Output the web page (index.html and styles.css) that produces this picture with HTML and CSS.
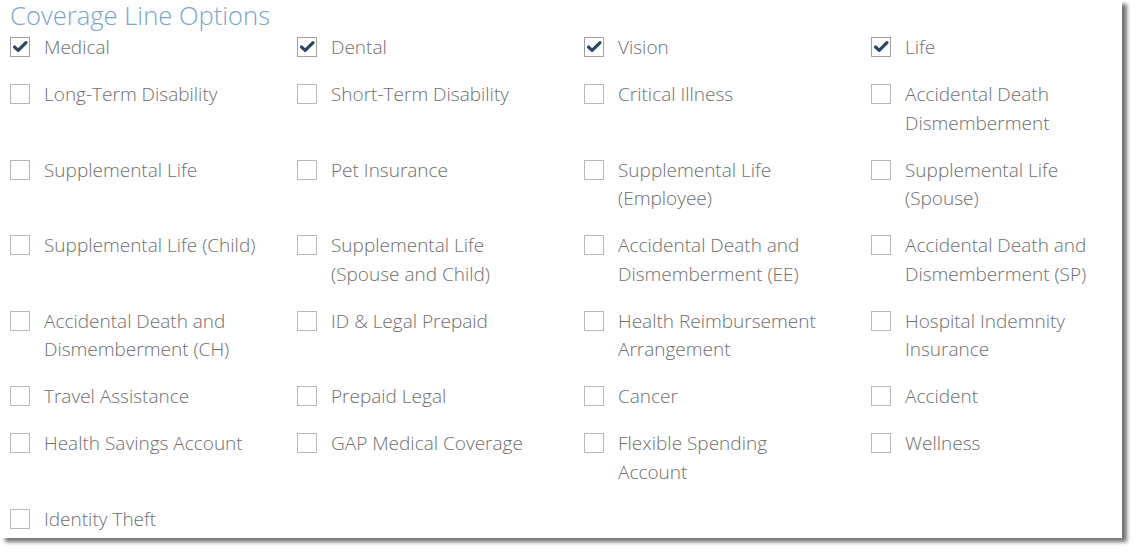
FILE: index.html
```html
<!DOCTYPE html>
<html>
<head>
<meta charset="utf-8">
<link rel="stylesheet" href="styles.css">
</head>
<body>
<div class="card">
  <h1 class="title">Coverage Line Options</h1>
  <div class="grid">
    <label class="opt"><span class="box checked"><svg viewBox="0 0 18 18"><path d="M3.5 9 L7.2 12.4 L15 4.6" /></svg></span><span class="txt">Medical</span></label>
    <label class="opt"><span class="box checked"><svg viewBox="0 0 18 18"><path d="M3.5 9 L7.2 12.4 L15 4.6" /></svg></span><span class="txt">Dental</span></label>
    <label class="opt"><span class="box checked"><svg viewBox="0 0 18 18"><path d="M3.5 9 L7.2 12.4 L15 4.6" /></svg></span><span class="txt">Vision</span></label>
    <label class="opt"><span class="box checked"><svg viewBox="0 0 18 18"><path d="M3.5 9 L7.2 12.4 L15 4.6" /></svg></span><span class="txt">Life</span></label>

    <label class="opt"><span class="box"></span><span class="txt">Long-Term Disability</span></label>
    <label class="opt"><span class="box"></span><span class="txt">Short-Term Disability</span></label>
    <label class="opt"><span class="box"></span><span class="txt">Critical Illness</span></label>
    <label class="opt"><span class="box"></span><span class="txt">Accidental Death<br>Dismemberment</span></label>

    <label class="opt"><span class="box"></span><span class="txt">Supplemental Life</span></label>
    <label class="opt"><span class="box"></span><span class="txt">Pet Insurance</span></label>
    <label class="opt"><span class="box"></span><span class="txt">Supplemental Life<br>(Employee)</span></label>
    <label class="opt"><span class="box"></span><span class="txt">Supplemental Life<br>(Spouse)</span></label>

    <label class="opt"><span class="box"></span><span class="txt">Supplemental Life (Child)</span></label>
    <label class="opt"><span class="box"></span><span class="txt">Supplemental Life<br>(Spouse and Child)</span></label>
    <label class="opt"><span class="box"></span><span class="txt">Accidental Death and<br>Dismemberment (EE)</span></label>
    <label class="opt"><span class="box"></span><span class="txt">Accidental Death and<br>Dismemberment (SP)</span></label>

    <label class="opt"><span class="box"></span><span class="txt">Accidental Death and<br>Dismemberment (CH)</span></label>
    <label class="opt"><span class="box"></span><span class="txt">ID &amp; Legal Prepaid</span></label>
    <label class="opt"><span class="box"></span><span class="txt">Health Reimbursement<br>Arrangement</span></label>
    <label class="opt"><span class="box"></span><span class="txt">Hospital Indemnity<br>Insurance</span></label>

    <label class="opt"><span class="box"></span><span class="txt">Travel Assistance</span></label>
    <label class="opt"><span class="box"></span><span class="txt">Prepaid Legal</span></label>
    <label class="opt"><span class="box"></span><span class="txt">Cancer</span></label>
    <label class="opt"><span class="box"></span><span class="txt">Accident</span></label>

    <label class="opt"><span class="box"></span><span class="txt">Health Savings Account</span></label>
    <label class="opt"><span class="box"></span><span class="txt">GAP Medical Coverage</span></label>
    <label class="opt"><span class="box"></span><span class="txt">Flexible Spending<br>Account</span></label>
    <label class="opt"><span class="box"></span><span class="txt">Wellness</span></label>

    <label class="opt"><span class="box"></span><span class="txt">Identity Theft</span></label>
  </div>
</div>
</body>
</html>
```
FILE: styles.css
```css
html, body {
  margin: 0;
  padding: 0;
  background: #ffffff;
}
body {
  font-family: "Open Sans", "Liberation Sans", sans-serif;
  padding-bottom: 15px;
}
.card {
  width: 1112px;
  height: 538px;
  padding: 0 0 0 10px;
  box-sizing: content-box;
  background: #ffffff;
  box-shadow: 5px 4px 4px rgba(0, 0, 0, 0.55);
}
.title {
  margin: 0;
  padding-top: 1px;
  font-size: 25.6px;
  line-height: 30px;
  font-weight: 300;
  color: #7ba3cd;
}
.grid {
  display: grid;
  grid-template-columns: repeat(4, 287px);
  row-gap: 18.5px;
  margin-top: 2px;
}
.opt {
  display: flex;
  align-items: flex-start;
  gap: 14px;
  font-size: 19px;
  line-height: 28.5px;
  font-weight: 300;
  color: #6e6e6e;
}
.box {
  flex: none;
  width: 18px;
  height: 18px;
  margin-top: 4px;
  border: 1px solid #b8b8b8;
  background: #fff;
  display: flex;
}
.box.checked {
  border-color: #a0a0a0;
}
.box svg {
  width: 18px;
  height: 18px;
  fill: none;
  stroke: #2f4363;
  stroke-width: 3.2;
  stroke-linecap: round;
  stroke-linejoin: round;
}
```
